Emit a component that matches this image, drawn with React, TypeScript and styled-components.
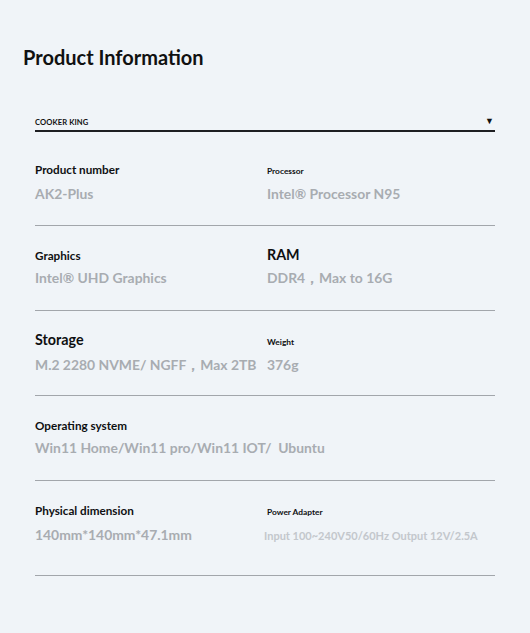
import styled, { createGlobalStyle } from 'styled-components';

const GlobalStyle = createGlobalStyle`
  html, body {
    margin: 0;
    padding: 0;
    background: #f0f4f8;
  }
  body {
    font-family: Lato, "Liberation Sans", sans-serif;
  }
`;

const Page = styled.div`
  width: 530px;
  min-height: 633px;
  background: #f0f4f8;
  padding: 44px 35px 0 35px;
  box-sizing: border-box;
`;

const Title = styled.h1`
  margin: 0 0 0 -12px;
  font-size: 20px;
  line-height: 26px;
  font-weight: 700;
  color: #111;
`;

const Select = styled.div`
  margin-top: 46px;
  display: flex;
  align-items: flex-end;
  justify-content: space-between;
  padding: 0 1px 3px 0;
  border-bottom: 2px solid #1e1f22;
  font-size: 7.6px;
  font-weight: 700;
  color: #111;
  letter-spacing: 0.1px;
`;

const Caret = styled.span`
  font-size: 9px;
  line-height: 9px;
  margin-bottom: 2px;
`;

const List = styled.div``;

type RowProps = { $height: number; $pad: number };

const Row = styled.div<RowProps>`
  display: grid;
  grid-template-columns: 232px 1fr;
  align-items: baseline;
  align-content: start;
  row-gap: 4px;
  height: ${(p) => p.$height}px;
  padding-top: ${(p) => p.$pad}px;
  box-sizing: border-box;
  border-bottom: 1.5px solid #a2a6ab;
`;

type Size = 'sm' | 'md' | 'lg';

const labelSize: Record<Size, number> = { sm: 8.4, md: 11.7, lg: 14.3 };

const Label = styled.div<{ $size: Size }>`
  font-size: ${(p) => labelSize[p.$size]}px;
  line-height: 18px;
  font-weight: 700;
  color: #0e0f11;
`;

const Value = styled.div<{ $light?: boolean; $wide?: boolean }>`
  font-size: ${(p) => (p.$light ? 11 : 13.9)}px;
  line-height: 20px;
  font-weight: 700;
  color: ${(p) => (p.$light ? '#c3c7cc' : '#a8acb1')};
  grid-column: ${(p) => (p.$wide ? '1 / span 2' : 'auto')};
  margin-left: ${(p) => (p.$light ? -3 : 0)}px;
  white-space: pre;
`;

type Spec = { label: string; size: Size; value: string; light?: boolean };

type RowData = { height: number; pad: number; cells: Spec[] };

const rows: RowData[] = [
  {
    height: 94,
    pad: 28,
    cells: [
      { label: 'Product number', size: 'md', value: 'AK2-Plus' },
      { label: 'Processor', size: 'sm', value: 'Intel® Processor N95' },
    ],
  },
  {
    height: 85,
    pad: 20,
    cells: [
      { label: 'Graphics', size: 'md', value: 'Intel® UHD Graphics' },
      { label: 'RAM', size: 'lg', value: 'DDR4，Max to 16G' },
    ],
  },
  {
    height: 85,
    pad: 20,
    cells: [
      { label: 'Storage', size: 'lg', value: 'M.2 2280 NVME/ NGFF，Max 2TB' },
      { label: 'Weight', size: 'sm', value: '376g' },
    ],
  },
  {
    height: 85,
    pad: 20,
    cells: [{ label: 'Operating system', size: 'md', value: 'Win11 Home/Win11 pro/Win11 IOT/  Ubuntu' }],
  },
  {
    height: 95,
    pad: 20,
    cells: [
      { label: 'Physical dimension', size: 'md', value: '140mm*140mm*47.1mm' },
      { label: 'Power Adapter', size: 'sm', value: 'Input 100~240V50/60Hz Output 12V/2.5A', light: true },
    ],
  },
];

const App = () => {
  return (
    <Page>
      <GlobalStyle />
      <Title>Product Information</Title>
      <Select>
        <span>COOKER KING</span>
        <Caret>▼</Caret>
      </Select>
      <List>
        {rows.map((row, i) => {
          const wide = row.cells.length === 1;
          return (
            <Row key={i} $height={row.height} $pad={row.pad}>
              {row.cells.map((c) => (
                <Label key={c.label} $size={c.size}>
                  {c.label}
                </Label>
              ))}
              {wide && <span />}
              {row.cells.map((c) => (
                <Value key={c.value} $light={c.light} $wide={wide}>
                  {c.value}
                </Value>
              ))}
            </Row>
          );
        })}
      </List>
    </Page>
  );
};

export default App;
